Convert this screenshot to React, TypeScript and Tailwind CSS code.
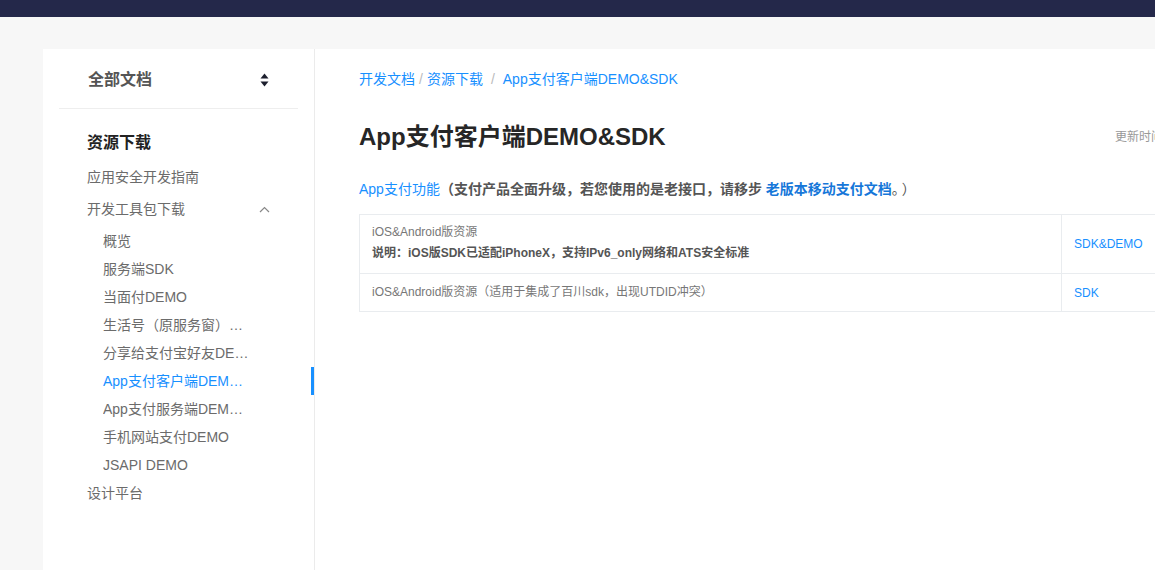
import React from "react";

const font = { fontFamily: '"Liberation Sans", "Noto Sans CJK SC", sans-serif' };

type NavItem = { label: string; active?: boolean };

const subItems: NavItem[] = [
  { label: "概览" },
  { label: "服务端SDK" },
  { label: "当面付DEMO" },
  { label: "生活号（原服务窗）DEMO" },
  { label: "分享给支付宝好友DEMO" },
  { label: "App支付客户端DEMO&SDK", active: true },
  { label: "App支付服务端DEMO&SDK" },
  { label: "手机网站支付DEMO" },
  { label: "JSAPI DEMO" },
];

function SortIcon() {
  return (
    <svg width="9" height="14" viewBox="0 0 9 14" className="text-[#1c1f2e]">
      <path d="M4.5 0.5 L8.5 5.5 L0.5 5.5 Z" fill="currentColor" />
      <path d="M4.5 13.5 L8.5 8.5 L0.5 8.5 Z" fill="currentColor" />
    </svg>
  );
}

function ChevronUp() {
  return (
    <svg width="11" height="7" viewBox="0 0 11 7" className="text-[#888]">
      <polyline points="1,6 5.5,1.5 10,6" fill="none" stroke="currentColor" strokeWidth="1.2" />
    </svg>
  );
}

function Sidebar() {
  return (
    <aside className="w-[272px] shrink-0 border-r border-[#ebebeb] bg-white">
      <div className="mx-4 flex h-[60px] items-center justify-between border-b border-[#eeeeee] pl-[29px] pr-[29px] pt-[3px]">
        <span className="text-[16px] font-semibold text-[#555]">全部文档</span>
        <SortIcon />
      </div>
      <div className="pt-[22px]">
        <div className="flex h-6 items-center pl-[44px] text-[16px] font-bold text-[#222]">资源下载</div>
        <div className="mt-[6px] flex h-8 items-center pl-[44px] text-[14px] text-[#6b6b6b]">应用安全开发指南</div>
        <div className="flex h-8 items-center justify-between pl-[44px] pr-[44px] text-[14px] text-[#6b6b6b]">
          <span>开发工具包下载</span>
          <ChevronUp />
        </div>
        <ul className="mt-[2px]">
          {subItems.map((item) => (
            <li key={item.label} className="relative flex h-7 items-center pl-[60px]">
              <span
                className={
                  item.active
                    ? "w-[146px] truncate text-[14px] text-[#1890ff]"
                    : "w-[146px] truncate text-[14px] text-[#6b6b6b]"
                }
              >
                {item.label}
              </span>
              {item.active && <span className="absolute right-0 top-0 h-7 w-[3px] bg-[#1890ff]" />}
            </li>
          ))}
        </ul>
        <div className="flex h-7 items-center pl-[44px] text-[14px] text-[#6b6b6b]">设计平台</div>
      </div>
    </aside>
  );
}

function Content() {
  return (
    <main className="w-[1000px] shrink-0 bg-white px-[44px]">
      {/* Breadcrumb */}
      <div className="flex h-[60px] items-center text-[14px] text-[#1890ff]">
        <span>开发文档</span>
        <span className="mx-[4px] text-[#bbb]">/</span>
        <span>资源下载</span>
        <span className="mx-[8px] text-[#bbb]">/</span>
        <span>App支付客户端DEMO&amp;SDK</span>
      </div>

      {/* Title */}
      <div className="mt-[12px] flex h-[32px] items-center">
        <h1 className="flex-1 text-[24px] font-bold text-[#262626]">App支付客户端DEMO&amp;SDK</h1>
        <span className="w-[156px] shrink-0 whitespace-nowrap text-[12px] text-[#999]">更新时间：2019-03-14 17:21</span>
      </div>

      {/* Intro */}
      <p className="mt-[25px] text-[14px] leading-[22px] text-[#555]">
        <span className="text-[#1890ff]">App支付功能</span>
        <span className="font-semibold">（支付产品全面升级，若您使用的是老接口，请移步 </span>
        <span className="font-bold text-[#1677d9]">老版本移动支付文档</span>
        <span className="tracking-[3px]">。）</span>
      </p>

      {/* Resource table */}
      <table className="mt-[14px] w-full border-collapse text-[12px]">
        <tbody>
          <tr className="border border-[#e9ecef]">
            <td className="px-3 pb-[9px] pt-[7px] leading-[21px] text-[#777]">
              <div>iOS&amp;Android版资源</div>
              <div className="font-bold text-[#555]">说明：iOS版SDK已适配iPhoneX，支持IPv6_only网络和ATS安全标准</div>
            </td>
            <td className="w-[209px] border-l border-[#e9ecef] px-3 text-[#1890ff]">SDK&amp;DEMO</td>
          </tr>
          <tr className="border border-[#e9ecef]">
            <td className="px-3 pb-[8px] pt-[8px] leading-[21px] text-[#777]">
              iOS&amp;Android版资源（适用于集成了百川sdk，出现UTDID冲突）
            </td>
            <td className="border-l border-[#e9ecef] px-3 text-[#1890ff]">SDK</td>
          </tr>
        </tbody>
      </table>
    </main>
  );
}

export default function App() {
  return (
    <div className="h-[570px] w-full overflow-hidden bg-[#f7f7f7]" style={font}>
      <div className="h-[17px] bg-[#24284a]" />
      <div className="flex min-h-[600px] pl-[43px] pt-[32px]">
        <Sidebar />
        <Content />
      </div>
    </div>
  );
}
